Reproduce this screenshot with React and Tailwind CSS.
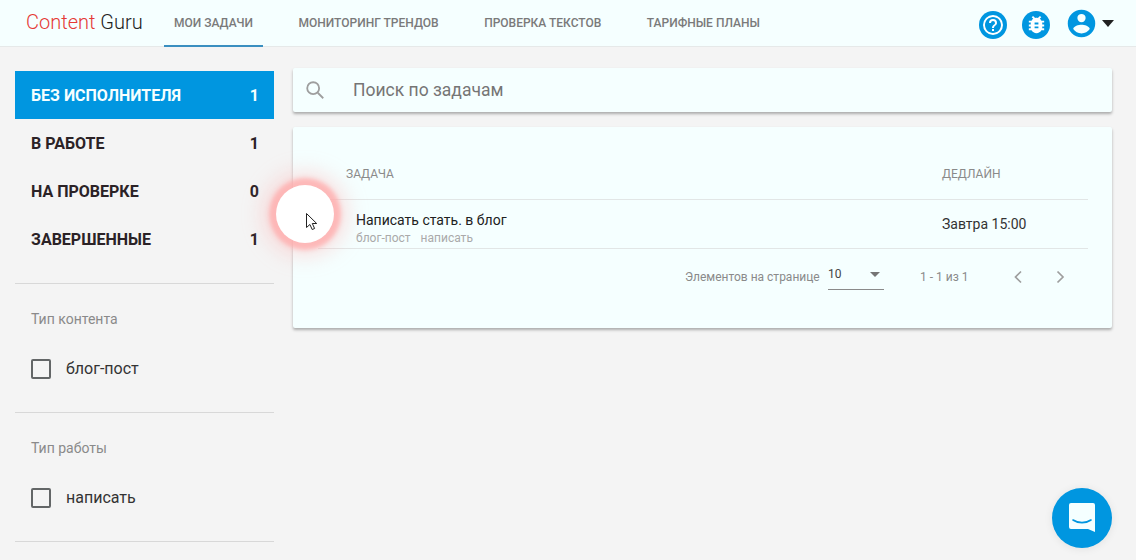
const STATUSES = [
  { label: 'Без исполнителя', count: 1, active: true },
  { label: 'В работе', count: 1 },
  { label: 'На проверке', count: 0 },
  { label: 'Завершенные', count: 1 },
]

const FILTERS = [
  { title: 'Тип контента', option: 'блог-пост' },
  { title: 'Тип работы', option: 'написать' },
]

const TABS = [
  { label: 'Мои задачи', active: true },
  { label: 'Мониторинг трендов' },
  { label: 'Проверка текстов' },
  { label: 'Тарифные планы' },
]

function Icon({ d, className }) {
  return (
    <svg viewBox="0 0 24 24" className={className} fill="currentColor">
      <path d={d} />
    </svg>
  )
}

const HELP = 'M11,18H13V16H11V18M12,2A10,10 0 0,0 2,12A10,10 0 0,0 12,22A10,10 0 0,0 22,12A10,10 0 0,0 12,2M12,20C7.59,20 4,16.41 4,12C4,7.59 7.59,4 12,4C16.41,4 20,7.59 20,12C20,16.41 16.41,20 12,20M12,6A4,4 0 0,0 8,10H10A2,2 0 0,1 12,8A2,2 0 0,1 14,10C14,12 11,11.75 11,15H13C13,12.75 16,12.5 16,10A4,4 0 0,0 12,6Z'
const BUG = 'M14,12H10V10H14M14,16H10V14H14M20,8H17.19C16.74,7.22 16.12,6.55 15.37,6.04L17,4.41L15.59,3L13.42,5.17C12.96,5.06 12.5,5 12,5C11.5,5 11.04,5.06 10.59,5.17L8.41,3L7,4.41L8.62,6.04C7.88,6.55 7.26,7.22 6.81,8H4V10H6.09C6.04,10.33 6,10.66 6,11V12H4V14H6V15C6,15.34 6.04,15.67 6.09,16H4V18H6.81C7.85,19.79 9.78,21 12,21C14.22,21 16.15,19.79 17.19,18H20V16H17.91C17.96,15.67 18,15.34 18,15V14H20V12H18V11C18,10.66 17.96,10.33 17.91,10H20V8Z'
const ACCOUNT = 'M12,19.2C9.5,19.2 7.29,17.92 6,16C6.03,14 10,12.9 12,12.9C14,12.9 17.97,14 18,16C16.71,17.92 14.5,19.2 12,19.2M12,5A3,3 0 0,1 15,8A3,3 0 0,1 12,11A3,3 0 0,1 9,8A3,3 0 0,1 12,5M12,2A10,10 0 0,0 2,12A10,10 0 0,0 12,22A10,10 0 0,0 22,12A10,10 0 0,0 12,2Z'

export default function App() {
  return (
    <div className="relative w-[1136px] h-[560px] overflow-hidden bg-[#f4f4f4] font-['Roboto',sans-serif] text-[#212121]">
      {/* Top bar */}
      <header className="flex items-stretch h-[47px] bg-[#f5ffff] border-b border-[#e6e9e9]">
        <div className="ml-[26px] w-[128px] pt-[9px] text-[20px] leading-[26px] font-light">
          <span className="text-[#e53935]">Content</span> <span className="text-[#212121]">Guru</span>
        </div>
        <nav className="flex gap-[25.5px] ml-[-18px] pl-[28px]">
          {TABS.map((tab) => (
            <div
              key={tab.label}
              className={`px-[10px] pt-[15px] text-[12px] leading-[16px] font-medium uppercase text-[#7a7a7a] ${
                tab.active ? 'border-b-2 border-[#3a8fc0] h-[47px]' : ''
              }`}
            >
              {tab.label}
            </div>
          ))}
        </nav>
        <div className="ml-auto mr-[22px] flex items-center">
          <div className="mt-[3px] flex items-center justify-center w-[28px] h-[28px] rounded-full bg-[#0096e0] text-white">
            <Icon d={HELP} className="w-[24px] h-[24px]" />
          </div>
          <div className="mt-[3px] ml-[15px] flex items-center justify-center w-[28px] h-[28px] rounded-full bg-[#0096e0] text-white">
            <Icon d={BUG} className="w-[23px] h-[23px]" />
          </div>
          <Icon d={ACCOUNT} className="ml-[14.5px] w-[33px] h-[33px] text-[#0096e0]" />
          <div className="ml-[4.5px] w-0 h-0 border-x-[6px] border-x-transparent border-t-[7px] border-t-[#212121]" />
        </div>
      </header>

      <div className="flex items-start pl-[15px] gap-[19px]">
        {/* Sidebar */}
        <aside className="w-[259px] shrink-0 pt-[24px]">
          {STATUSES.map((s) => (
            <div
              key={s.label}
              className={`flex items-center justify-between h-[48px] pl-[16px] pr-[15px] pt-[2px] text-[16px] font-bold uppercase ${
                s.active ? 'bg-[#0096e0] text-[#f5ffff]' : 'text-[#2b2226]'
              }`}
            >
              <span>{s.label}</span>
              <span>{s.count}</span>
            </div>
          ))}
          <div className="mt-[20px]">
            {FILTERS.map((f) => (
              <div key={f.title} className="border-t border-[#d8d8d8] h-[129px] pl-[16px] pt-[27px]">
                <div className="text-[14px] leading-[16px] text-[#8a8a8a]">{f.title}</div>
                <div className="flex items-center mt-[30px]">
                  <div className="w-[20px] h-[20px] rounded-[2px] border-2 border-[#636667]" />
                  <span className="ml-[15px] text-[16px] leading-[22px] mt-[1px] text-[#333]">{f.option}</span>
                </div>
              </div>
            ))}
            <div className="border-t border-[#d8d8d8]" />
          </div>
        </aside>

        {/* Main */}
        <main className="w-[819px] pt-[21px]">
          <div className="flex items-center h-[44px] bg-[#f5ffff] rounded-[2px] shadow-[0_2px_3px_rgba(0,0,0,0.3)]">
            <svg viewBox="0 0 24 24" className="ml-[11px] w-[22px] h-[22px] text-[#9e9e9e]" fill="none" stroke="currentColor" strokeWidth="2">
              <circle cx="10" cy="10" r="6.5" />
              <path d="M15 15l6 6" />
            </svg>
            <span className="ml-[27px] text-[17.5px] text-[#757575]">Поиск по задачам</span>
          </div>

          <section className="mt-[15px] h-[201px] bg-[#f5ffff] rounded-[2px] shadow-[0_2px_3px_rgba(0,0,0,0.3)] pl-[25px] pr-[24px]">
            <div className="flex items-end h-[73px] border-b border-[#e2e6e6] pb-[18px] text-[12px] leading-[14px] uppercase text-[#8a8a8a]">
              <span className="ml-[28px] w-[596px]">Задача</span>
              <span>Дедлайн</span>
            </div>
            <div className="flex items-center h-[49px] border-b border-[#e2e6e6]">
              <div className="ml-[38px] w-[586px]">
                <div className="text-[14px] leading-[16px] text-[#212121] mt-[9px]">Написать стать. в блог</div>
                <div className="flex gap-[10px] mt-[3px] text-[12px] leading-[14px] text-[#aaaaaa]">
                  <span>блог-пост</span>
                  <span>написать</span>
                </div>
              </div>
              <span className="text-[14px] text-[#333]">Завтра 15:00</span>
            </div>
            <div className="flex items-center h-[56px] pl-[367px] text-[12px] text-[#8a8a8a]">
              <span className="w-[143px]">Элементов на странице</span>
              <div className="relative w-[56px] h-[28px] border-b border-[#8a8a8a] mb-[2px]">
                <span className="absolute left-0 top-[3px] text-[#444]">10</span>
                <div className="absolute right-[4px] top-[10px] w-0 h-0 border-x-[5px] border-x-transparent border-t-[5px] border-t-[#757575]" />
              </div>
              <span className="ml-[36px] w-[86px]">1 - 1 из 1</span>
              <svg viewBox="0 0 24 24" className="w-[24px] h-[24px] text-[#9e9e9e]" fill="none" stroke="currentColor" strokeWidth="1.7">
                <path d="M15 6.5L9.5 12l5.5 5.5" />
              </svg>
              <svg viewBox="0 0 24 24" className="ml-[17.5px] w-[24px] h-[24px] text-[#9e9e9e]" fill="none" stroke="currentColor" strokeWidth="1.7">
                <path d="M9.5 6.5L15 12l-5.5 5.5" />
              </svg>
            </div>
          </section>
        </main>
      </div>

      {/* Click highlight from the recording */}
      <div className="absolute left-[276px] top-[185px] w-[58px] h-[58px] rounded-full bg-white shadow-[0_0_4px_7px_rgba(255,170,170,0.75),0_0_20px_14px_rgba(255,180,180,0.4)]">
        <svg viewBox="0 0 14 20" className="absolute left-[29px] top-[27px] w-[14px] h-[20px]">
          <path d="M1.5 1.5v14l3.4-3 2.3 5 2.4-1-2.3-5h4.4z" fill="#fff" stroke="#222" strokeWidth="1" />
        </svg>
      </div>

      {/* Chat launcher */}
      <div className="absolute left-[1052px] top-[488px] flex items-center justify-center w-[60px] h-[60px] rounded-full bg-[#0096e0] shadow-[0_1px_8px_rgba(0,0,0,0.08)]">
        <svg viewBox="0 0 32 32" className="w-[32px] h-[32px]">
          <path d="M3 3a2 2 0 0 1 2-2h22a2 2 0 0 1 2 2v27l-7-3H5a2 2 0 0 1-2-2z" fill="#f5ffff" />
          <path d="M7 18c5 3.5 13 3.5 18 0" fill="none" stroke="#0096e0" strokeWidth="1.6" strokeLinecap="round" />
        </svg>
      </div>
    </div>
  )
}
